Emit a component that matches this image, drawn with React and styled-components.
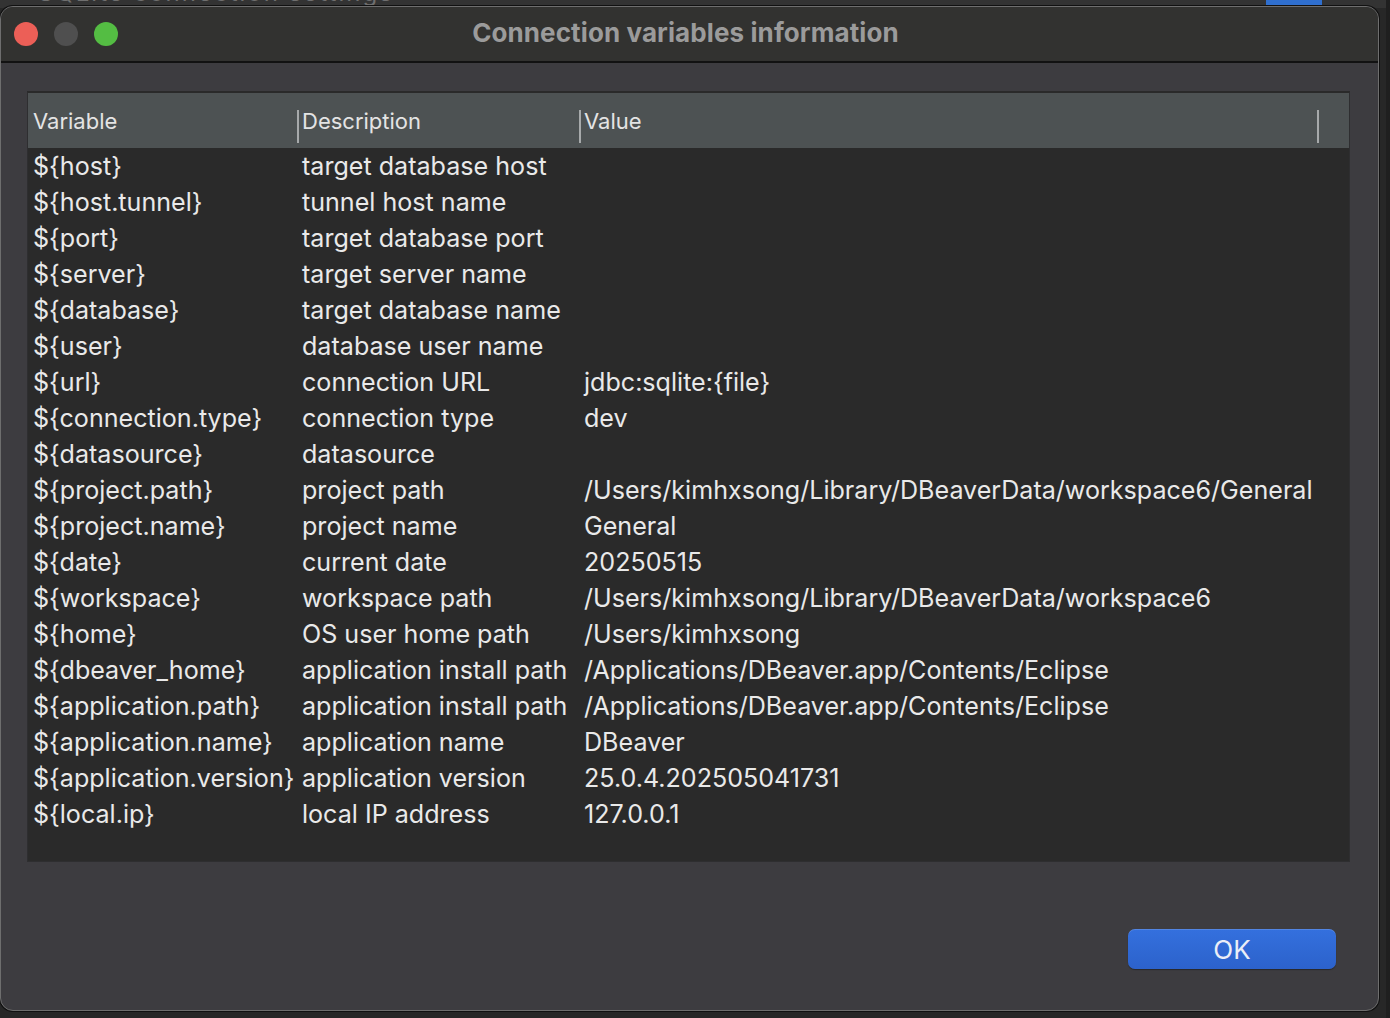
import React from 'react';
import { styled, createGlobalStyle } from 'styled-components';

const rows = [
  ['${host}', 'target database host', ''],
  ['${host.tunnel}', 'tunnel host name', ''],
  ['${port}', 'target database port', ''],
  ['${server}', 'target server name', ''],
  ['${database}', 'target database name', ''],
  ['${user}', 'database user name', ''],
  ['${url}', 'connection URL', 'jdbc:sqlite:{file}'],
  ['${connection.type}', 'connection type', 'dev'],
  ['${datasource}', 'datasource', ''],
  ['${project.path}', 'project path', '/Users/kimhxsong/Library/DBeaverData/workspace6/General'],
  ['${project.name}', 'project name', 'General'],
  ['${date}', 'current date', '20250515'],
  ['${workspace}', 'workspace path', '/Users/kimhxsong/Library/DBeaverData/workspace6'],
  ['${home}', 'OS user home path', '/Users/kimhxsong'],
  ['${dbeaver_home}', 'application install path', '/Applications/DBeaver.app/Contents/Eclipse'],
  ['${application.path}', 'application install path', '/Applications/DBeaver.app/Contents/Eclipse'],
  ['${application.name}', 'application name', 'DBeaver'],
  ['${application.version}', 'application version', '25.0.4.202505041731'],
  ['${local.ip}', 'local IP address', '127.0.0.1'],
];

export default function App() {
  return (
    <>
      <GlobalStyle />
      <Desktop>
        <Backdrop>
          <BackTitle>SQLite connection settings</BackTitle>
          <BackBlue />
        </Backdrop>
        <Window>
          <TitleBar>
            <Lights>
              <Light color="#ec5f57" />
              <Light color="#4f4f4f" />
              <Light color="#54bd43" />
            </Lights>
            <Title>Connection variables information</Title>
          </TitleBar>
          <Body>
            <Table>
              <Header>
                <HeadCell>Variable</HeadCell>
                <HeadCell sep>Description</HeadCell>
                <HeadCell sep>Value</HeadCell>
                <HeadEnd />
              </Header>
              <Rows>
                {rows.map((r) => (
                  <Row key={r[0]}>
                    <Cell>{r[0]}</Cell>
                    <Cell>{r[1]}</Cell>
                    <Cell>{r[2]}</Cell>
                  </Row>
                ))}
              </Rows>
            </Table>
            <Footer>
              <OkButton>OK</OkButton>
            </Footer>
          </Body>
        </Window>
      </Desktop>
    </>
  );
}

const GlobalStyle = createGlobalStyle`
  html, body {
    margin: 0;
    padding: 0;
    background: #262626;
  }
  * { box-sizing: border-box; }
`;

const Desktop = styled.div`
  width: 1390px;
  height: 1018px;
  position: relative;
  overflow: hidden;
  background: #272727;
  font-family: 'Inter', 'Noto Sans', sans-serif;
  border-right: 4px solid #1f1f1f;
`;

const Backdrop = styled.div`
  position: absolute;
  top: 0;
  left: 0;
  right: 0;
  height: 8px;
  overflow: hidden;
  background: #333333;
`;

const BackTitle = styled.div`
  position: absolute;
  left: 38px;
  top: -22px;
  font-size: 24px;
  color: #6f6f6f;
  letter-spacing: 2px;
`;

const BackBlue = styled.div`
  position: absolute;
  left: 1266px;
  top: 0;
  width: 56px;
  height: 8px;
  background: #2f6fcf;
`;

const Window = styled.div`
  position: absolute;
  left: 0;
  top: 6px;
  width: 1379px;
  height: 1005px;
  border-radius: 13px;
  border: 1px solid #6e6e6e;
  background: #3d3c40;
  overflow: hidden;
  display: flex;
  flex-direction: column;
  box-shadow: 0 0 0 1px #111;
`;

const TitleBar = styled.div`
  height: 56px;
  flex-shrink: 0;
  background: #323230;
  border-bottom: 2px solid #121212;
  display: flex;
  align-items: center;
  position: relative;
`;

const Lights = styled.div`
  display: flex;
  gap: 16px;
  padding-left: 13px;
`;

const Light = styled.span`
  width: 24px;
  height: 24px;
  border-radius: 50%;
  background: ${(p) => p.color};
`;

const Title = styled.div`
  position: absolute;
  left: 0;
  right: 0;
  top: 0;
  bottom: 4px;
  display: flex;
  align-items: center;
  justify-content: center;
  padding-right: 8px;
  font-size: 26px;
  font-weight: 700;
  color: #9b9b9b;
  letter-spacing: 0.1px;
  pointer-events: none;
`;

const Body = styled.div`
  flex: 1;
  display: flex;
  flex-direction: column;
  padding: 28px 28px 0 26px;
`;

const Table = styled.div`
  height: 771px;
  background: #2a2a2a;
  border: 1px solid #2e2e30;
  border-top: 2px solid #2a2a2a;
  display: flex;
  flex-direction: column;
`;

const Header = styled.div`
  height: 55px;
  flex-shrink: 0;
  background: #4d5253;
  display: grid;
  grid-template-columns: 269px 282px 738px 1fr;
  align-items: center;
`;

const HeadCell = styled.div`
  height: 33px;
  margin-top: 12px;
  display: flex;
  align-items: center;
  padding-left: ${(p) => (p.sep ? '3px' : '5px')};
  padding-bottom: 12px;
  border-left: ${(p) => (p.sep ? '2px solid #a7aaab' : 'none')};
  font-size: 22px;
  color: #e4e4e4;
`;

const HeadEnd = styled.div`
  height: 33px;
  margin-top: 12px;
  border-left: 2px solid #a7aaab;
`;

const Rows = styled.div`
  display: flex;
  flex-direction: column;
`;

const Row = styled.div`
  height: 36px;
  display: grid;
  grid-template-columns: 269px 282px 1fr;
  align-items: center;
`;

const Cell = styled.div`
  padding-left: 5px;
  font-size: 25.1px;
  color: #e9e9e9;
  white-space: nowrap;
`;

const Footer = styled.div`
  display: flex;
  justify-content: flex-end;
  padding: 67px 14px 0 0;
`;

const OkButton = styled.button`
  width: 208px;
  height: 40px;
  border: none;
  border-radius: 7px;
  background: linear-gradient(#3470de, #2c62cb);
  box-shadow: 0 1px 1px rgba(0, 0, 0, 0.35), inset 0 1px 0 rgba(255, 255, 255, 0.15);
  color: #eaeef7;
  font-family: 'Inter', sans-serif;
  font-size: 26px;
  padding: 0;
`;
